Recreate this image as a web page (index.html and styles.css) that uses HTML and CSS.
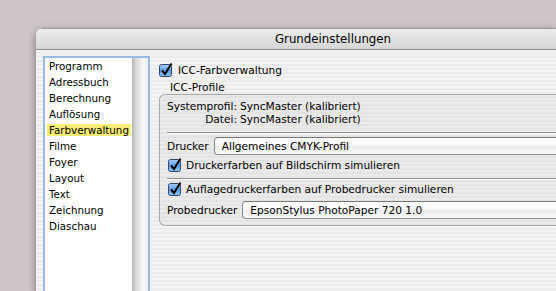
FILE: index.html
```html
<!DOCTYPE html>
<html>
<head>
  <link rel="stylesheet" href="styles.css">
</head>
<body>
  <div class="window">
    <div class="titlebar">Grundeinstellungen</div>
    <div class="content">
      <div class="sidebar">
        <ul class="list">
          <li>Programm</li>
          <li>Adressbuch</li>
          <li>Berechnung</li>
          <li>Auflösung</li>
          <li class="selected"><span>Farbverwaltung</span></li>
          <li>Filme</li>
          <li>Foyer</li>
          <li>Layout</li>
          <li>Text</li>
          <li>Zeichnung</li>
          <li>Diaschau</li>
        </ul>
        <div class="scrolltrack"></div>
      </div>

      <div class="panel">
        <div class="check-row main-check">
          <svg class="checkbox" viewBox="0 0 14 14" width="14" height="14">
            <defs>
              <linearGradient id="cb1" x1="0" y1="0" x2="0" y2="1">
                <stop offset="0" stop-color="#a9d0f7"/>
                <stop offset="0.5" stop-color="#5a9de6"/>
                <stop offset="1" stop-color="#8cc3f5"/>
              </linearGradient>
            </defs>
            <rect x="0.5" y="1.5" width="12" height="12" rx="2" fill="url(#cb1)" stroke="#34476b"/>
            <path d="M3 7.5 L6 11 L12.5 0.5" fill="none" stroke="#000" stroke-width="2"/>
          </svg>
          <span>ICC-Farbverwaltung</span>
        </div>
        <div class="group-title">ICC-Profile</div>
        <div class="group">
          <div class="profile-grid">
            <span class="key">Systemprofil:</span><span>SyncMaster (kalibriert)</span>
            <span class="key">Datei:</span><span>SyncMaster (kalibriert)</span>
          </div>
          <div class="separator"></div>
          <div class="popup-row">
            <span>Drucker</span>
            <div class="popup">Allgemeines CMYK-Profil</div>
          </div>
          <div class="check-row inner-check">
            <svg class="checkbox" viewBox="0 0 14 14" width="14" height="14">
              <rect x="0.5" y="1.5" width="12" height="12" rx="2" fill="url(#cb1)" stroke="#34476b"/>
              <path d="M3 7.5 L6 11 L12.5 0.5" fill="none" stroke="#000" stroke-width="2"/>
            </svg>
            <span>Druckerfarben auf Bildschirm simulieren</span>
          </div>
          <div class="separator second"></div>
          <div class="check-row inner-check">
            <svg class="checkbox" viewBox="0 0 14 14" width="14" height="14">
              <rect x="0.5" y="1.5" width="12" height="12" rx="2" fill="url(#cb1)" stroke="#34476b"/>
              <path d="M3 7.5 L6 11 L12.5 0.5" fill="none" stroke="#000" stroke-width="2"/>
            </svg>
            <span>Auflagedruckerfarben auf Probedrucker simulieren</span>
          </div>
          <div class="popup-row last">
            <span>Probedrucker</span>
            <div class="popup">EpsonStylus PhotoPaper 720 1.0</div>
          </div>
        </div>
      </div>
    </div>
  </div>
</body>
</html>
```

FILE: styles.css
```css
body {
  margin: 0;
  padding: 0;
  background-color: #cec6c6;
  font-family: 'DejaVu Sans', sans-serif;
  font-size: 10.3px;
  color: #000;
  overflow: hidden;
  height: 291px;
}

.window {
  margin: 28px 0 0 36px;
  width: 520px;
  height: 263px;
  border-radius: 7px 0 0 0;
  background: repeating-linear-gradient(#ececec 0, #ececec 2px, #f3f3f3 2px, #f3f3f3 4px);
  box-shadow: 0 3px 9px rgba(0, 0, 0, 0.45);
  overflow: hidden;
}

/* title is centred on the full (wider) window, so shift it */
.titlebar {
  height: 22px;
  line-height: 21px;
  padding-left: 74px;
  text-align: center;
  font-size: 11.8px;
  background: linear-gradient(#ececec, #d6d6d6);
  border-bottom: 1px solid #8e8e8e;
  border-top: 1px solid #9a9a9a;
  box-sizing: border-box;
}

.content {
  display: flex;
  padding: 6px 0 0 7px;
}

.sidebar {
  display: flex;
  width: 103px;
  height: 233px;
  border: 2px solid #98bbe4;
  border-bottom: none;
  background: #fff;
}

.list {
  list-style: none;
  margin: 0;
  padding: 0 0 0 2px;
  flex: 1;
}

.list li {
  height: 16px;
  line-height: 16px;
  padding-left: 2px;
}

.list li.selected {
  padding-left: 0;
}

.list li.selected span {
  display: inline-block;
  background: #f9ec74;
  line-height: 12px;
  padding: 0 2px;
  margin-top: 2px;
  width: 80px;
}

.scrolltrack {
  width: 16px;
  background: linear-gradient(to right, #b4b4b4, #d8d8d8 25%, #f8f8f8 70%, #ececec);
}

.panel {
  flex: 1;
  min-width: 0;
  padding: 7px 0 0 9px;
  font-size: 10.6px;
}

.check-row {
  display: flex;
  align-items: center;
  height: 14px;
  white-space: nowrap;
}

.checkbox {
  flex: none;
}

.main-check .checkbox {
  margin-right: 5px;
}

.group-title {
  line-height: 13px;
  margin-top: 4px;
  padding-left: 11px;
}

.group {
  border: 1px solid #a9a9a9;
  border-right: none;
  border-radius: 6px 0 0 6px;
  background: rgba(0, 0, 0, 0.035);
  padding: 5px 0 6px 7px;
  box-shadow: 0 1px 1px rgba(255, 255, 255, 0.8);
}

.profile-grid {
  display: grid;
  grid-template-columns: auto 1fr;
  column-gap: 3px;
  line-height: 13px;
}

.profile-grid .key {
  justify-self: end;
}

.separator {
  height: 1px;
  background: #8f8f8f;
  margin: 6px 0 4px 0;
  box-shadow: 0 1px 0 #fafafa;
}

.separator.second {
  margin: 7px 0 3px 0;
}

.popup-row {
  display: flex;
  align-items: center;
  gap: 5px;
  height: 18px;
  white-space: nowrap;
}

.popup-row.last {
  margin-top: 6px;
}

.popup {
  flex: 1;
  height: 18px;
  box-sizing: border-box;
  line-height: 16px;
  padding-left: 7px;
  border: 1px solid #8a8a8a;
  border-top-color: #777;
  border-right: none;
  border-radius: 4px 0 0 4px;
  background: linear-gradient(#ffffff, #f6f6f6 50%, #ececec 51%, #fafafa);
}

.inner-check {
  margin: 3px 0 0 1px;
  height: 13px;
}

.inner-check .checkbox {
  margin-right: 4px;
}
```
